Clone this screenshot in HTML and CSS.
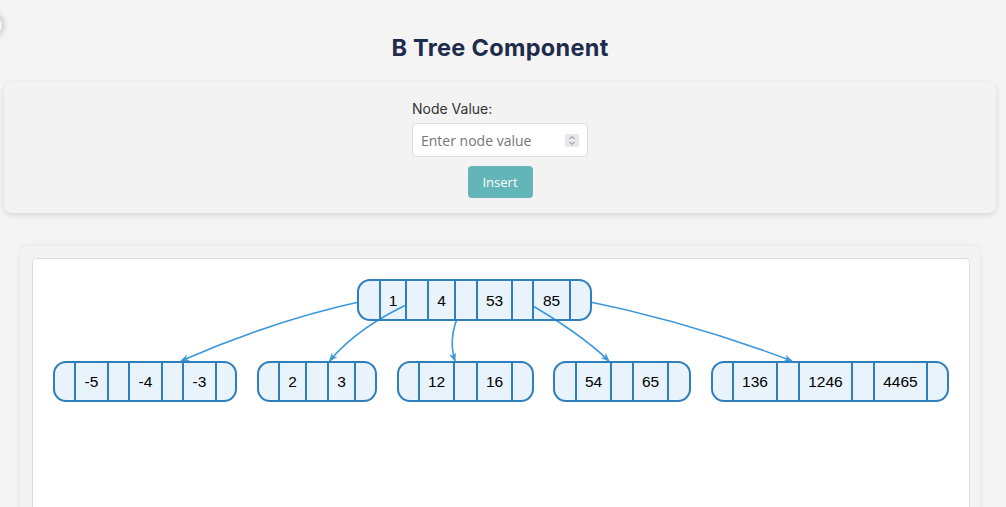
FILE: index.html
```html
<!DOCTYPE html>
<html>
    <head>
        <link rel="stylesheet" href="styles.css">
    </head>
    <body>
        <div class="corner-dot"></div>
        <h1 class="page-title">B Tree Component</h1>

        <div class="controls">
            <div class="field">
                <label for="nodeValue">Node Value:</label>
                <div class="input-wrap">
                    <input type="text" id="nodeValue" placeholder="Enter node value">
                    <span class="spinner">
                        <svg width="14" height="13" viewBox="0 0 14 13">
                            <path d="M4.5 5 L7 2.5 L9.5 5" />
                            <path d="M4.5 8 L7 10.5 L9.5 8" />
                        </svg>
                    </span>
                </div>
            </div>
            <button class="insert-btn">Insert</button>
        </div>

        <div class="tree-panel">
            <div class="tree-canvas">
                <svg class="tree" width="936" height="240" viewBox="33 259 936 240">
                    <defs>
                        <marker id="arrow" viewBox="0 0 10 10" refX="9" refY="5" markerWidth="9" markerHeight="9" markerUnits="userSpaceOnUse" orient="auto">
                            <path class="arrow-head" d="M0,1 L10,5 L0,9 L3,5 z" />
                        </marker>
                    </defs>

                    <!-- child nodes -->
                    <g class="bnode">
                        <rect class="node" x="54" y="362" width="182" height="39" rx="12" />
                        <line class="sep" x1="75" y1="362" x2="75" y2="401" />
                        <line class="sep" x1="108" y1="362" x2="108" y2="401" />
                        <line class="sep" x1="129" y1="362" x2="129" y2="401" />
                        <line class="sep" x1="162" y1="362" x2="162" y2="401" />
                        <line class="sep" x1="183" y1="362" x2="183" y2="401" />
                        <line class="sep" x1="216" y1="362" x2="216" y2="401" />
                        <text class="key" x="91.5" y="381.5">-5</text>
                        <text class="key" x="145.5" y="381.5">-4</text>
                        <text class="key" x="199.5" y="381.5">-3</text>
                    </g>
                    <g class="bnode">
                        <rect class="node" x="258" y="362" width="118" height="39" rx="12" />
                        <line class="sep" x1="279" y1="362" x2="279" y2="401" />
                        <line class="sep" x1="306" y1="362" x2="306" y2="401" />
                        <line class="sep" x1="328" y1="362" x2="328" y2="401" />
                        <line class="sep" x1="355" y1="362" x2="355" y2="401" />
                        <text class="key" x="292.5" y="381.5">2</text>
                        <text class="key" x="341.5" y="381.5">3</text>
                    </g>
                    <g class="bnode">
                        <rect class="node" x="398" y="362" width="135" height="39" rx="12" />
                        <line class="sep" x1="419" y1="362" x2="419" y2="401" />
                        <line class="sep" x1="454" y1="362" x2="454" y2="401" />
                        <line class="sep" x1="477" y1="362" x2="477" y2="401" />
                        <line class="sep" x1="512" y1="362" x2="512" y2="401" />
                        <text class="key" x="436.5" y="381.5">12</text>
                        <text class="key" x="494.5" y="381.5">16</text>
                    </g>
                    <g class="bnode">
                        <rect class="node" x="554" y="362" width="136" height="39" rx="12" />
                        <line class="sep" x1="576" y1="362" x2="576" y2="401" />
                        <line class="sep" x1="611" y1="362" x2="611" y2="401" />
                        <line class="sep" x1="633" y1="362" x2="633" y2="401" />
                        <line class="sep" x1="668" y1="362" x2="668" y2="401" />
                        <text class="key" x="593.5" y="381.5">54</text>
                        <text class="key" x="650.5" y="381.5">65</text>
                    </g>
                    <g class="bnode">
                        <rect class="node" x="712" y="362" width="236" height="39" rx="12" />
                        <line class="sep" x1="733" y1="362" x2="733" y2="401" />
                        <line class="sep" x1="777" y1="362" x2="777" y2="401" />
                        <line class="sep" x1="799" y1="362" x2="799" y2="401" />
                        <line class="sep" x1="852" y1="362" x2="852" y2="401" />
                        <line class="sep" x1="874" y1="362" x2="874" y2="401" />
                        <line class="sep" x1="927" y1="362" x2="927" y2="401" />
                        <text class="key" x="755" y="381.5">136</text>
                        <text class="key" x="825.5" y="381.5">1246</text>
                        <text class="key" x="900.5" y="381.5">4465</text>
                    </g>

                    <!-- root: fill first, edges over key cells, pointer cells on top -->
                    <rect class="node-fill" x="358" y="280" width="233" height="40" rx="12" />
                    <text class="key" x="393" y="300">1</text>
                    <text class="key" x="441.5" y="300">4</text>
                    <text class="key" x="494.5" y="300">53</text>
                    <text class="key" x="551.5" y="300">85</text>

                    <path class="edge" d="M368,300 Q275,319.5 181,361" marker-end="url(#arrow)" />
                    <path class="edge" d="M417,300 Q359,325.5 329.5,361" marker-end="url(#arrow)" />
                    <path class="edge" d="M466,300 Q446,333.5 455,361" marker-end="url(#arrow)" />
                    <path class="edge" d="M522.5,300 Q579,332 609,361" marker-end="url(#arrow)" />
                    <path class="edge" d="M581,300 Q686.5,321 792,361" marker-end="url(#arrow)" />

                    <rect class="cover" x="359" y="289" width="20" height="22" />
                    <rect class="cover" x="407" y="281" width="20" height="38" />
                    <rect class="cover" x="456" y="281" width="20" height="38" />
                    <rect class="cover" x="513" y="281" width="19" height="38" />
                    <rect class="cover" x="571" y="289" width="19" height="22" />

                    <rect class="node-outline" x="358" y="280" width="233" height="40" rx="12" />
                    <line class="sep" x1="380" y1="280" x2="380" y2="320" />
                    <line class="sep" x1="406" y1="280" x2="406" y2="320" />
                    <line class="sep" x1="428" y1="280" x2="428" y2="320" />
                    <line class="sep" x1="455" y1="280" x2="455" y2="320" />
                    <line class="sep" x1="477" y1="280" x2="477" y2="320" />
                    <line class="sep" x1="512" y1="280" x2="512" y2="320" />
                    <line class="sep" x1="533" y1="280" x2="533" y2="320" />
                    <line class="sep" x1="570" y1="280" x2="570" y2="320" />
                </svg>
            </div>
        </div>
    </body>
</html>
```

FILE: styles.css
```css
body {
    margin: 0;
    padding: 0;
    background-color: #f4f4f4;
    font-family: "Inter", "Open Sans", sans-serif;
    color: #333;
}
.corner-dot {
    position: fixed;
    left: -20px;
    top: 14px;
    width: 22px;
    height: 22px;
    border-radius: 50%;
    background-color: #f4f4f4;
    box-shadow: 0 0 7px rgba(0, 0, 0, 0.35);
}
.page-title {
    margin: 34px 0 20px;
    padding-right: 6px;
    text-align: center;
    font-size: 23.5px;
    line-height: 28px;
    font-weight: 700;
    letter-spacing: 0.3px;
    color: #1e2b4d;
}
.controls {
    display: flex;
    flex-direction: column;
    align-items: center;
    width: 992px;
    margin-left: 4px;
    padding: 16px 0 15px;
    box-sizing: border-box;
    background-color: #f3f3f3;
    border-radius: 8px;
    box-shadow: 0 2px 6px rgba(0, 0, 0, 0.12);
}
.field {
    display: flex;
    flex-direction: column;
    width: 176px;
}
.field label {
    font-size: 14px;
    line-height: 21px;
    color: #333;
    margin-bottom: 4px;
}
.input-wrap {
    display: flex;
    align-items: center;
    height: 34px;
    padding: 0 8px;
    box-sizing: border-box;
    background-color: #fff;
    border: 1px solid #ddd;
    border-radius: 4px;
}
.input-wrap input {
    flex: 1;
    min-width: 0;
    padding: 0;
    border: none;
    outline: none;
    background: transparent;
    font-family: "Open Sans", sans-serif;
    font-size: 14px;
    color: #333;
}
.input-wrap input::placeholder {
    color: #767676;
}
.spinner {
    display: flex;
    width: 14px;
    height: 13px;
    background-color: #e8e8ec;
}
.spinner path {
    fill: none;
    stroke: #7a7a7a;
    stroke-width: 1;
}
.insert-btn {
    margin-top: 9px;
    width: 65px;
    height: 32px;
    padding: 0;
    border: none;
    border-radius: 4px;
    background-color: #62b6b7;
    color: #fff;
    font-family: "Open Sans", sans-serif;
    font-size: 13px;
    cursor: pointer;
}
.tree-panel {
    width: 960px;
    margin: 33px 0 0 20px;
    padding: 12px 10px 12px 12px;
    box-sizing: border-box;
    background-color: #f3f3f3;
    border-radius: 8px;
    box-shadow: 0 0 6px rgba(0, 0, 0, 0.07);
}
.tree-canvas {
    height: 400px;
    background-color: #fff;
    border: 1px solid #ddd;
    border-radius: 4px;
}
.tree {
    display: block;
}
.node {
    fill: #e8f3fb;
    stroke: #2f7fbd;
    stroke-width: 2;
}
.node-fill,
.cover {
    fill: #e8f3fb;
}
.node-outline {
    fill: none;
    stroke: #2f7fbd;
    stroke-width: 2;
}
.sep {
    stroke: #2f7fbd;
    stroke-width: 2;
}
.key {
    font-family: "Liberation Sans", Arial, sans-serif;
    font-size: 15.5px;
    fill: #000;
    text-anchor: middle;
    dominant-baseline: central;
}
.edge {
    fill: none;
    stroke: #3a98db;
    stroke-width: 1.6;
}
.arrow-head {
    fill: #3a98db;
}
```
